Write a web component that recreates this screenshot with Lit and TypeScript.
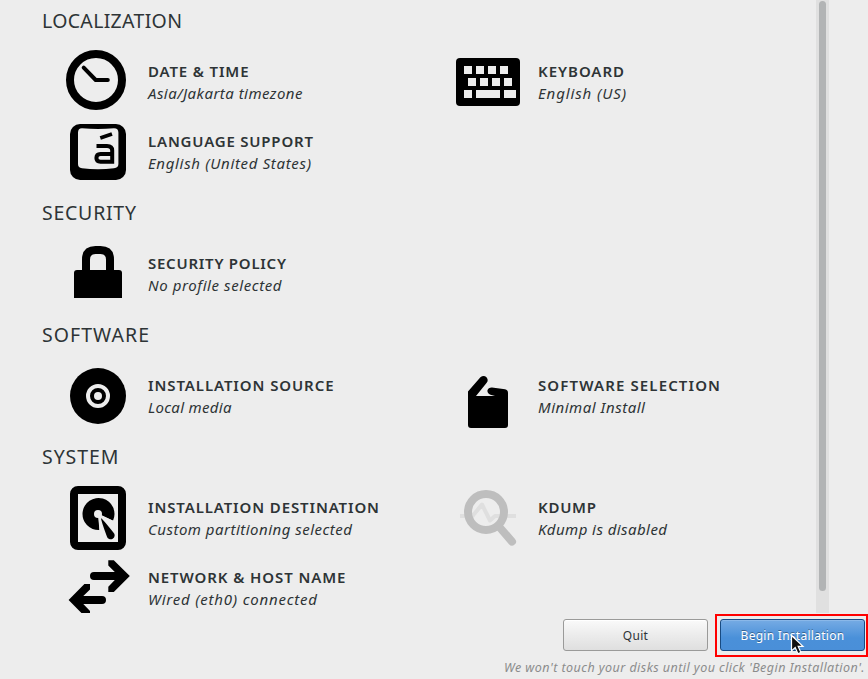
import { LitElement, html, css, svg } from "lit";
import { customElement, property } from "lit/decorators.js";

/** A single line of text whose tracking is adjusted to occupy a given width. */
@customElement("fit-text")
class FitText extends LitElement {
  @property() text = "";
  @property({ type: Number }) width = 0;
  static styles = css`
    :host { display: block; white-space: pre; }
  `;
  render() {
    return html`<span>${this.text}</span>`;
  }
  updated() {
    const span = this.renderRoot.querySelector("span") as HTMLElement;
    const fit = () => {
      span.style.letterSpacing = "0";
      const natural = span.getBoundingClientRect().width;
      span.style.letterSpacing = `${(this.width - natural) / (this.text.length - 1)}px`;
    };
    fit();
    document.fonts.ready.then(fit);
  }
}

const icons: Record<string, unknown> = {
  clock: svg`<circle cx="30" cy="32" r="26" fill="none" stroke="#000" stroke-width="8"/>
    <path d="M17.7 19.7 29.7 32H41.8" fill="none" stroke="#000" stroke-width="4" stroke-linecap="round" stroke-linejoin="round"/>`,
  keyboard: svg`<rect x="0" y="10" width="64" height="48" rx="4"/>
    <path fill="#ededed" d="M8 18h8v8H8zM20 18h8v8h-8zM32 18h8v8h-8zM44 18h8v8h-8zM12 30h8v8h-8zM24 30h8v8h-8zM36 30h8v8h-8zM48 30h8v8h-8zM8 42h8v8H8zM20 42h24v8H20zM48 42h12v8H48z"/>`,
  language: svg`<rect x="4" y="6" width="56" height="56" rx="10"/>
    <path fill="#ededed" d="M16 10.2Q32 11.6 48 10.2Q52.4 10.2 52.4 14.5V46Q52.4 50 48 50.2Q32 52.4 16 50.2Q12 50 12 46V14.5Q12 10.2 16 10.2z"/>
    <path d="M34.3 20 46 16" fill="none" stroke="#000" stroke-width="3.8"/>
    <path d="M30.5 28H41Q46.2 28 46.2 32.5V43.7H34.5Q30.4 43.7 30.4 40Q30.4 36 34.5 36H46" fill="none" stroke="#000" stroke-width="4"/>`,
  lock: svg`<path d="M8 58V33q0-3 3-3h42q3 0 3 3v25z"/>
    <path d="M20 32V19.5Q20 10 29.5 10H34.5Q44 10 44 19.5V32" fill="none" stroke="#000" stroke-width="8"/>`,
  disc: svg`<circle cx="32" cy="34" r="28"/><circle cx="32" cy="34" r="10" fill="none" stroke="#ededed" stroke-width="4"/>
    <circle cx="32" cy="34" r="4" fill="#ededed"/>`,
  package: svg`<path d="M12 29.5 24.4 15.3Q27.6 12.6 30.5 15.2Q32.8 18 30.7 20.8L20 34H39L34.5 32.8Q31.2 31.3 31.4 28.5Q32.2 25.4 36 25.5L49 27.2Q52 27.8 52 31V63q0 3-3 3H15q-3 0-3-3z"/>`,
  hdd: svg`<rect x="8" y="6" width="48" height="56" rx="4" fill="none" stroke="#000" stroke-width="8"/>
    <path d="M33.4 46A16 16 0 1 1 47 36.8L32 30z"/><circle cx="32" cy="30" r="4" fill="#ededed"/>
    <path fill="#ededed" d="M32.5 32 33.6 47 41 50 50 38 35.2 31z"/>
    <path d="M35 34.2Q36.4 34.8 47.4 48.4A4 4 0 1 1 40.8 52.3Q35.2 37 35 34.2z"/>`,
  network: svg`<path d="M42.3 6.2H47.8L63.8 22 47.8 38H42.3V32.8L48.8 26H28a4 4 0 0 1 0-8H48.8L42.3 11.4z"/>
    <path d="M24 30H18.4L2.6 46 18.4 62H24V57L17.3 50H36a4 4 0 0 0 0-8H17.3L24 35.4z"/>`,
  kdump: svg`<path d="M4 32H16.5L26 20.5 34 36.5 39 32H60" fill="none" stroke="#dfdfdf" stroke-width="4" stroke-linejoin="round"/>
    <g fill="none" stroke="#bebebe" stroke-width="8"><circle cx="30" cy="28" r="18"/><path d="M42.5 42 56 57.6" stroke-linecap="round"/></g>`,
};

interface Spoke { icon: string; title: string; tw: number; status: string; sw: number; }
interface Section { name: string; width: number; spokes: Spoke[]; }

const sections: Section[] = [
  { name: "LOCALIZATION", width: 140, spokes: [
    { icon: "clock", title: "DATE & TIME", tw: 100.5, status: "Asia/Jakarta timezone", sw: 154.5 },
    { icon: "keyboard", title: "KEYBOARD", tw: 86, status: "English (US)", sw: 88 },
    { icon: "language", title: "LANGUAGE SUPPORT", tw: 165, status: "English (United States)", sw: 163 },
  ] },
  { name: "SECURITY", width: 94, spokes: [
    { icon: "lock", title: "SECURITY POLICY", tw: 138, status: "No profile selected", sw: 133.5 },
  ] },
  { name: "SOFTWARE", width: 107, spokes: [
    { icon: "disc", title: "INSTALLATION SOURCE", tw: 185.5, status: "Local media", sw: 83.5 },
    { icon: "package", title: "SOFTWARE SELECTION", tw: 182, status: "Minimal Install", sw: 107 },
  ] },
  { name: "SYSTEM", width: 76.5, spokes: [
    { icon: "hdd", title: "INSTALLATION DESTINATION", tw: 231, status: "Custom partitioning selected", sw: 204 },
    { icon: "kdump", title: "KDUMP", tw: 58, status: "Kdump is disabled", sw: 129 },
    { icon: "network", title: "NETWORK & HOST NAME", tw: 197.5, status: "Wired (eth0) connected", sw: 169 },
  ] },
];

@customElement("app-root")
class AppRoot extends LitElement {
  static styles = css`
    :host {
      display: flex; flex-direction: column; box-sizing: border-box;
      width: 868px; height: 679px; overflow: hidden;
      background: #ededed; color: #2e3436;
      font-family: "Noto Sans", "Open Sans", sans-serif; font-size: 15px;
    }
    .hub { display: flex; height: 613px; overflow: hidden; }
    .sections { width: 816px; height: 613px; overflow: hidden; box-sizing: border-box; }
    .heading { height: 52px; padding: 12px 0 0 42px; box-sizing: border-box; font-size: 19.5px; line-height: 26px; }
    .section:first-child .heading { height: 48px; padding-top: 8px; }
    .grid { display: grid; grid-template-columns: 390px 390px; grid-auto-rows: 70px; padding-left: 66px; }
    .spoke { display: flex; gap: 18px; }
    .icon { width: 64px; height: 70px; flex: none; overflow: visible; }
    .labels { padding-top: 12px; line-height: 22px; }
    .title { font-weight: 650; }
    .status { font-style: italic; }
    .track { width: 13px; height: 613px; background: #e0e0e0; padding: 1px 3px 0; box-sizing: border-box; }
    .thumb { width: 7px; height: 590px; border-radius: 4px; background: #b2b4b5; }
    .actions { display: flex; justify-content: flex-end; height: 44px; padding-top: 1px; box-sizing: border-box; }
    .button {
      width: 145px; height: 32px; box-sizing: border-box; border: 1px solid #9a9a99; border-radius: 3px;
      display: flex; justify-content: center; font-size: 12px; line-height: 32px;
      background: linear-gradient(#fafafa, #ededed 45%, #dfdfdf);
      box-shadow: inset 0 1px #fff;
    }
    .quit { margin: 5px 7px 0 0; }
    .primary {
      color: #fff; border-color: #184b82; text-shadow: 0 -1px rgba(0, 0, 0, 0.35);
      background: linear-gradient(#76abe4, #4a90d9 60%, #4a8fd8);
      box-shadow: inset 0 1px #8ab8e9;
    }
    .callout { position: relative; width: 153px; height: 43px; box-sizing: border-box; border: 2px solid #ff0000; padding: 3px 0 0 3px; }
    .cursor { position: absolute; left: 73px; top: 18px; width: 16px; height: 22px; }
    .note { align-self: flex-end; margin-right: 3px; font-size: 12.5px; line-height: 22px; font-style: italic; color: #8b8c8c; }
  `;

  private spoke(s: Spoke) {
    return html`<div class="spoke">
      <svg class="icon" viewBox="0 0 64 70">${icons[s.icon]}</svg>
      <div class="labels">
        <fit-text class="title" .text=${s.title} .width=${s.tw}></fit-text>
        <fit-text class="status" .text=${s.status} .width=${s.sw}></fit-text>
      </div>
    </div>`;
  }

  render() {
    return html`
      <div class="hub">
        <div class="sections">
          ${sections.map((s) => html`<div class="section">
            <fit-text class="heading" .text=${s.name} .width=${s.width}></fit-text>
            <div class="grid">${s.spokes.map((p) => this.spoke(p))}</div>
          </div>`)}
        </div>
        <div class="track"><div class="thumb"></div></div>
      </div>
      <div class="actions">
        <div class="button quit"><fit-text .text=${"Quit"} .width=${25}></fit-text></div>
        <div class="callout">
          <div class="button primary"><fit-text .text=${"Begin Installation"} .width=${103.5}></fit-text></div>
          <svg class="cursor" viewBox="0 0 16 22">
            <path d="M1.5 1.5V17L5.2 13.6 7.9 19.7 10.9 18.4 8.2 12.4H13z" fill="#111" stroke="#fff" stroke-width="1.2"/>
          </svg>
        </div>
      </div>
      <fit-text class="note" .text=${"We won't touch your disks until you click 'Begin Installation'."} .width=${360.5}></fit-text>
    `;
  }
}
